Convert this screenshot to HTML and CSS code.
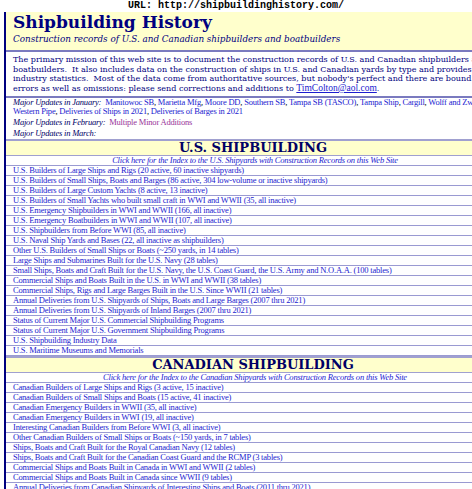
FILE: index.html
```html
<!DOCTYPE html>
<html>
<head>
<meta charset="utf-8">
<title>Shipbuilding History</title>
<link rel="stylesheet" href="styles.css">
</head>
<body>
<div class="urlbar">URL: http://shipbuildinghistory.com/</div>
<div class="page">
  <div class="masthead">
    <h1 class="title">Shipbuilding History</h1>
    <p class="subtitle">Construction records of U.S. and Canadian shipbuilders and boatbuilders</p>
  </div>
  <div class="intro">The primary mission of this web site is to document the construction records of U.S. and Canadian shipbuilders and boatbuilders.&nbsp; It also includes data on the construction of ships in U.S. and Canadian yards by type and provides industry statistics.&nbsp; Most of the data come from authoritative sources, but nobody's perfect and there are bound to be errors as well as omissions: please send corrections and additions to <a class="mail" href="#">TimColton@aol.com</a>.</div>
  <div class="updates">
    <p class="upd"><span class="lbl">Major Updates in January:</span>&nbsp; <a href="#">Manitowoc SB</a>, <a href="#">Marietta Mfg</a>, <a href="#">Moore DD</a>, <a href="#">Southern SB</a>, <a href="#">Tampa SB (TASCO)</a>, <a href="#">Tampa Ship</a>, <a href="#">Cargill</a>, <a href="#">Wolff and Zwicker</a>,<br><a href="#">Western Pipe</a>, <a href="#">Deliveries of Ships in 2021</a>, <a href="#">Deliveries of Barges in 2021</a></p>
    <p class="upd"><span class="lbl">Major Updates in February:</span>&nbsp; <a class="visited" href="#">Multiple Minor Additions</a></p>
    <p class="upd"><span class="lbl">Major Updates in March:</span></p>
  </div>
  <h2 class="band">U.S. SHIPBUILDING</h2>
  <div class="row idx"><a href="#">Click here for the Index to the U.S. Shipyards with Construction Records on this Web Site</a></div>
  <div class="row"><a href="#">U.S. Builders of Large Ships and Rigs (20 active, 60 inactive shipyards)</a></div>
  <div class="row"><a href="#">U.S. Builders of Small Ships, Boats and Barges (86 active, 304 low-volume or inactive shipyards)</a></div>
  <div class="row"><a href="#">U.S. Builders of Large Custom Yachts (8 active, 13 inactive)</a></div>
  <div class="row"><a href="#">U.S. Builders of Small Yachts who built small craft in WWI and WWII (35, all inactive)</a></div>
  <div class="row"><a href="#">U.S. Emergency Shipbuilders in WWI and WWII (166, all inactive)</a></div>
  <div class="row"><a href="#">U.S. Emergency Boatbuilders in WWI and WWII (107, all inactive)</a></div>
  <div class="row"><a href="#">U.S. Shipbuilders from Before WWI (85, all inactive)</a></div>
  <div class="row"><a href="#">U.S. Naval Ship Yards and Bases (22, all inactive as shipbuilders)</a></div>
  <div class="row"><a href="#">Other U.S. Builders of Small Ships or Boats (~250 yards, in 14 tables)</a></div>
  <div class="row"><a href="#">Large Ships and Submarines Built for the U.S. Navy (28 tables)</a></div>
  <div class="row"><a href="#">Small Ships, Boats and Craft Built for the U.S. Navy, the U.S. Coast Guard, the U.S. Army and N.O.A.A. (100 tables)</a></div>
  <div class="row"><a href="#">Commercial Ships and Boats Built in the U.S. in WWI and WWII (38 tables)</a></div>
  <div class="row"><a href="#">Commercial Ships, Rigs and Large Barges Built in the U.S. Since WWII (21 tables)</a></div>
  <div class="row"><a href="#">Annual Deliveries from U.S. Shipyards of Ships, Boats and Large Barges (2007 thru 2021)</a></div>
  <div class="row"><a href="#">Annual Deliveries from U.S. Shipyards of Inland Barges (2007 thru 2021)</a></div>
  <div class="row"><a href="#">Status of Current Major U.S. Commercial Shipbuilding Programs</a></div>
  <div class="row"><a href="#">Status of Current Major U.S. Government Shipbuilding Programs</a></div>
  <div class="row"><a href="#">U.S. Shipbuilding Industry Data</a></div>
  <div class="row"><a href="#">U.S. Maritime Museums and Memorials</a></div>
  <h2 class="band">CANADIAN SHIPBUILDING</h2>
  <div class="row idx"><a href="#">Click here for the Index to the Canadian Shipyards with Construction Records on this Web Site</a></div>
  <div class="row"><a href="#">Canadian Builders of Large Ships and Rigs (3 active, 15 inactive)</a></div>
  <div class="row"><a href="#">Canadian Builders of Small Ships and Boats (15 active, 41 inactive)</a></div>
  <div class="row"><a href="#">Canadian Emergency Builders in WWII (35, all inactive)</a></div>
  <div class="row"><a href="#">Canadian Emergency Builders in WWI (19, all inactive)</a></div>
  <div class="row"><a href="#">Interesting Canadian Builders from Before WWI (3, all inactive)</a></div>
  <div class="row"><a href="#">Other Canadian Builders of Small Ships or Boats (~150 yards, in 7 tables)</a></div>
  <div class="row"><a href="#">Ships, Boats and Craft Built for the Royal Canadian Navy (12 tables)</a></div>
  <div class="row"><a href="#">Ships, Boats and Craft Built for the Canadian Coast Guard and the RCMP (3 tables)</a></div>
  <div class="row"><a href="#">Commercial Ships and Boats Built in Canada in WWI and WWII (2 tables)</a></div>
  <div class="row"><a href="#">Commercial Ships and Boats Built in Canada since WWII (9 tables)</a></div>
  <div class="row"><a href="#">Annual Deliveries from Canadian Shipyards of Interesting Ships and Boats (2011 thru 2021)</a></div>
  <div class="row"><a href="#">Status of Current Major Canadian Shipbuilding Programs</a></div>
</div>
</body>
</html>
```
FILE: styles.css
```css
html, body {
  margin: 0;
  padding: 0;
  background: #ffffff;
  overflow: hidden;
}
body {
  width: 472px;
  height: 489px;
  font-family: "Liberation Serif", "Times New Roman", serif;
}
a {
  color: #1c1cd0;
  text-decoration: none;
}
.urlbar {
  height: 12px;
  font-family: "Liberation Mono", "Courier New", monospace;
  font-weight: bold;
  font-size: 10px;
  line-height: 12px;
  text-align: center;
  color: #000;
}
.page {
  width: 498px;
  margin-left: 4px;
  border-left: 2px solid #000080;
}
.masthead {
  background: #ffffcc;
  height: 38px;
  padding-left: 7px;
  border-bottom: 2px solid #7a7abf;
  overflow: hidden;
}
.title {
  margin: 0;
  font-family: "DejaVu Serif", serif;
  font-weight: bold;
  font-size: 17px;
  line-height: 21px;
  color: #000080;
}
.subtitle {
  margin: 0;
  font-family: "DejaVu Serif", serif;
  font-style: italic;
  font-size: 8.8px;
  line-height: 12px;
  color: #000080;
}
.intro {
  padding: 3px 0 2px 7px;
  font-family: "DejaVu Serif", serif;
  font-size: 8.05px;
  line-height: 9.7px;
  color: #000080;
  border-bottom: 2px solid #7a7abf;
}
.mail {
  font-family: "Liberation Serif", "Times New Roman", serif;
  font-size: 9.5px;
  text-decoration: underline;
}
.updates {
  padding: 0 0 0 7px;
}
.upd {
  margin: 0 0 1.5px 0;
  font-size: 8.5px;
  letter-spacing: -0.2px;
  line-height: 9.5px;
  white-space: nowrap;
}
.upd:last-child {
  margin-bottom: 0;
}
.lbl {
  font-style: italic;
  color: #000066;
}
.visited {
  color: #993399;
}
.band {
  margin: 0;
  height: 14px;
  padding-right: 4px;
  background: #ffffcc;
  border-top: 2px solid #a0a0d0;
  border-bottom: 1px solid #a0a0d0;
  font-family: "DejaVu Serif", serif;
  font-weight: bold;
  font-size: 13px;
  line-height: 14px;
  text-align: center;
  color: #000066;
}
.row {
  height: 9px;
  border-bottom: 1px solid #9a9ad2;
  padding-left: 7px;
  font-size: 8.5px;
  letter-spacing: -0.2px;
  line-height: 9px;
  white-space: nowrap;
}
.idx {
  text-align: center;
  padding-left: 0;
  font-style: italic;
}
```
